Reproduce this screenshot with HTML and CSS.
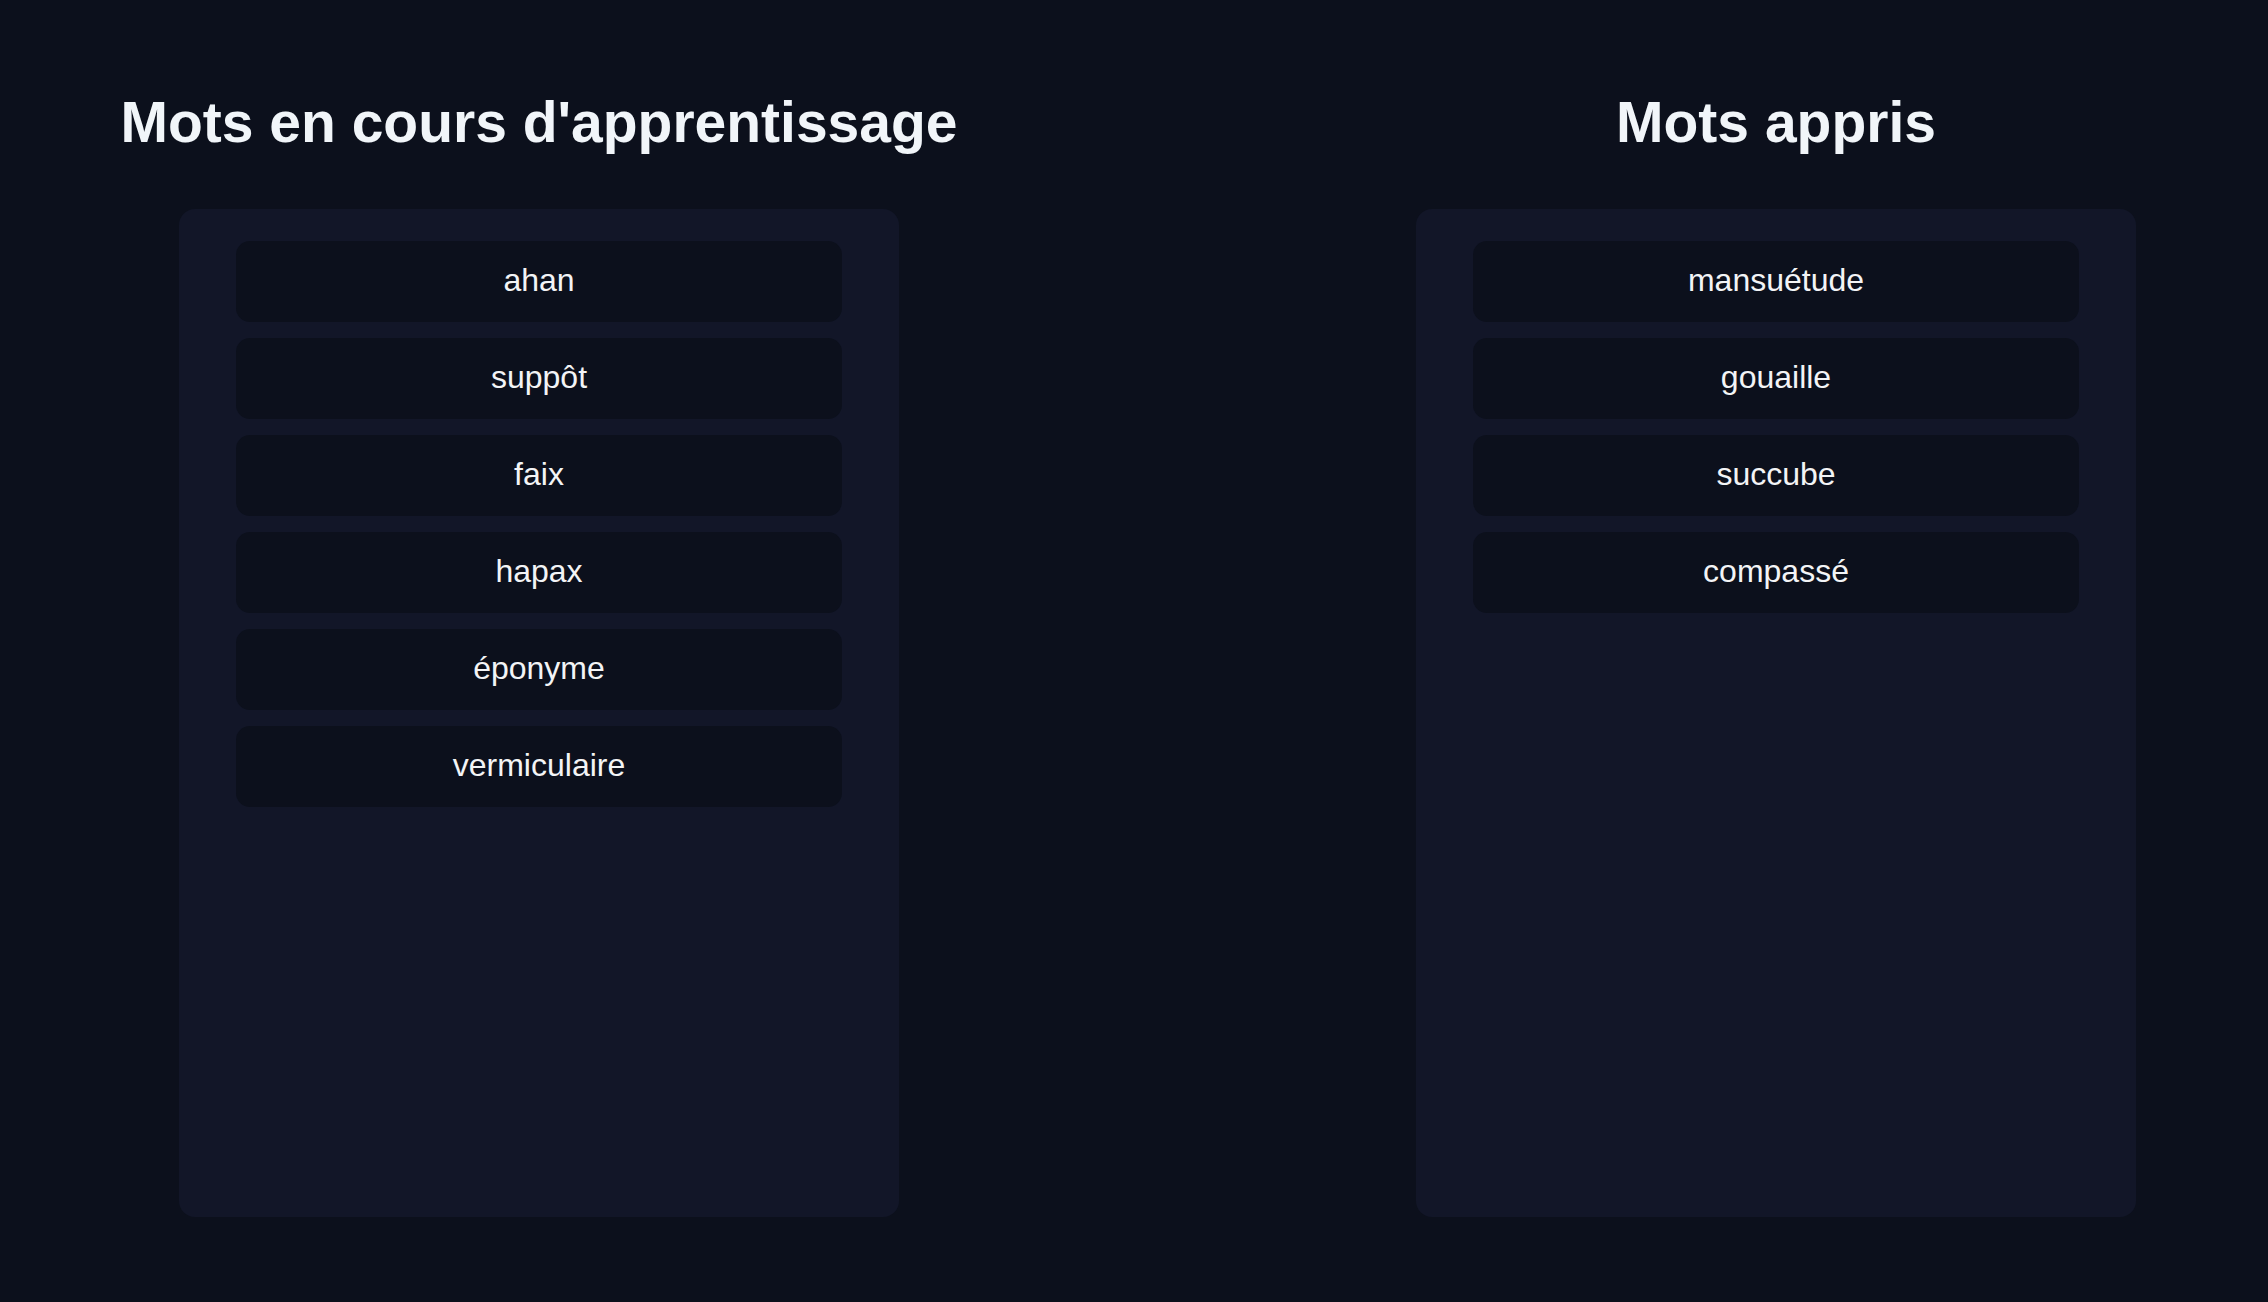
FILE: index.html
```html
<!DOCTYPE html>
<html lang="fr">
<head>
  <meta charset="UTF-8">
  <title>Mots</title>
  <link rel="stylesheet" href="styles.css">
</head>
<body>
  <div class="board">
    <section class="column">
      <h2>Mots en cours d'apprentissage</h2>
      <div class="word-list">
        <div class="word">ahan</div>
        <div class="word">suppôt</div>
        <div class="word">faix</div>
        <div class="word">hapax</div>
        <div class="word">éponyme</div>
        <div class="word">vermiculaire</div>
      </div>
    </section>
    <section class="column">
      <h2>Mots appris</h2>
      <div class="word-list">
        <div class="word">mansuétude</div>
        <div class="word">gouaille</div>
        <div class="word">succube</div>
        <div class="word">compassé</div>
      </div>
    </section>
  </div>
</body>
</html>
```
FILE: styles.css
```css
* {
    margin: 0;
    padding: 0;
    box-sizing: border-box;
}

body {
    background: #0c101c;
    color: #f1f5f9;
    font-family: "Liberation Sans", Arial, sans-serif;
}

/* Two columns */
.board {
    display: flex;
    justify-content: space-between;
    padding: 90px 72px 0 119px;
}

.column {
    width: 840px;
    display: flex;
    flex-direction: column;
    align-items: center;
}

h2 {
    font-size: 57px;
    font-weight: bold;
    line-height: 64px;
    margin-bottom: 55px;
    color: #f1f5f9;
    white-space: nowrap;
}

.word-list {
    width: 720px;
    min-height: 1008px;
    background: #121628;
    border-radius: 16px;
    padding: 32px 57px;
    display: flex;
    flex-direction: column;
    gap: 16px;
}

.word {
    background: #0c101c;
    border-radius: 14px;
    padding: 21px 10px 23px;
    text-align: center;
    font-size: 32px;
    line-height: 37px;
    color: #f3f4f6;
}
```
